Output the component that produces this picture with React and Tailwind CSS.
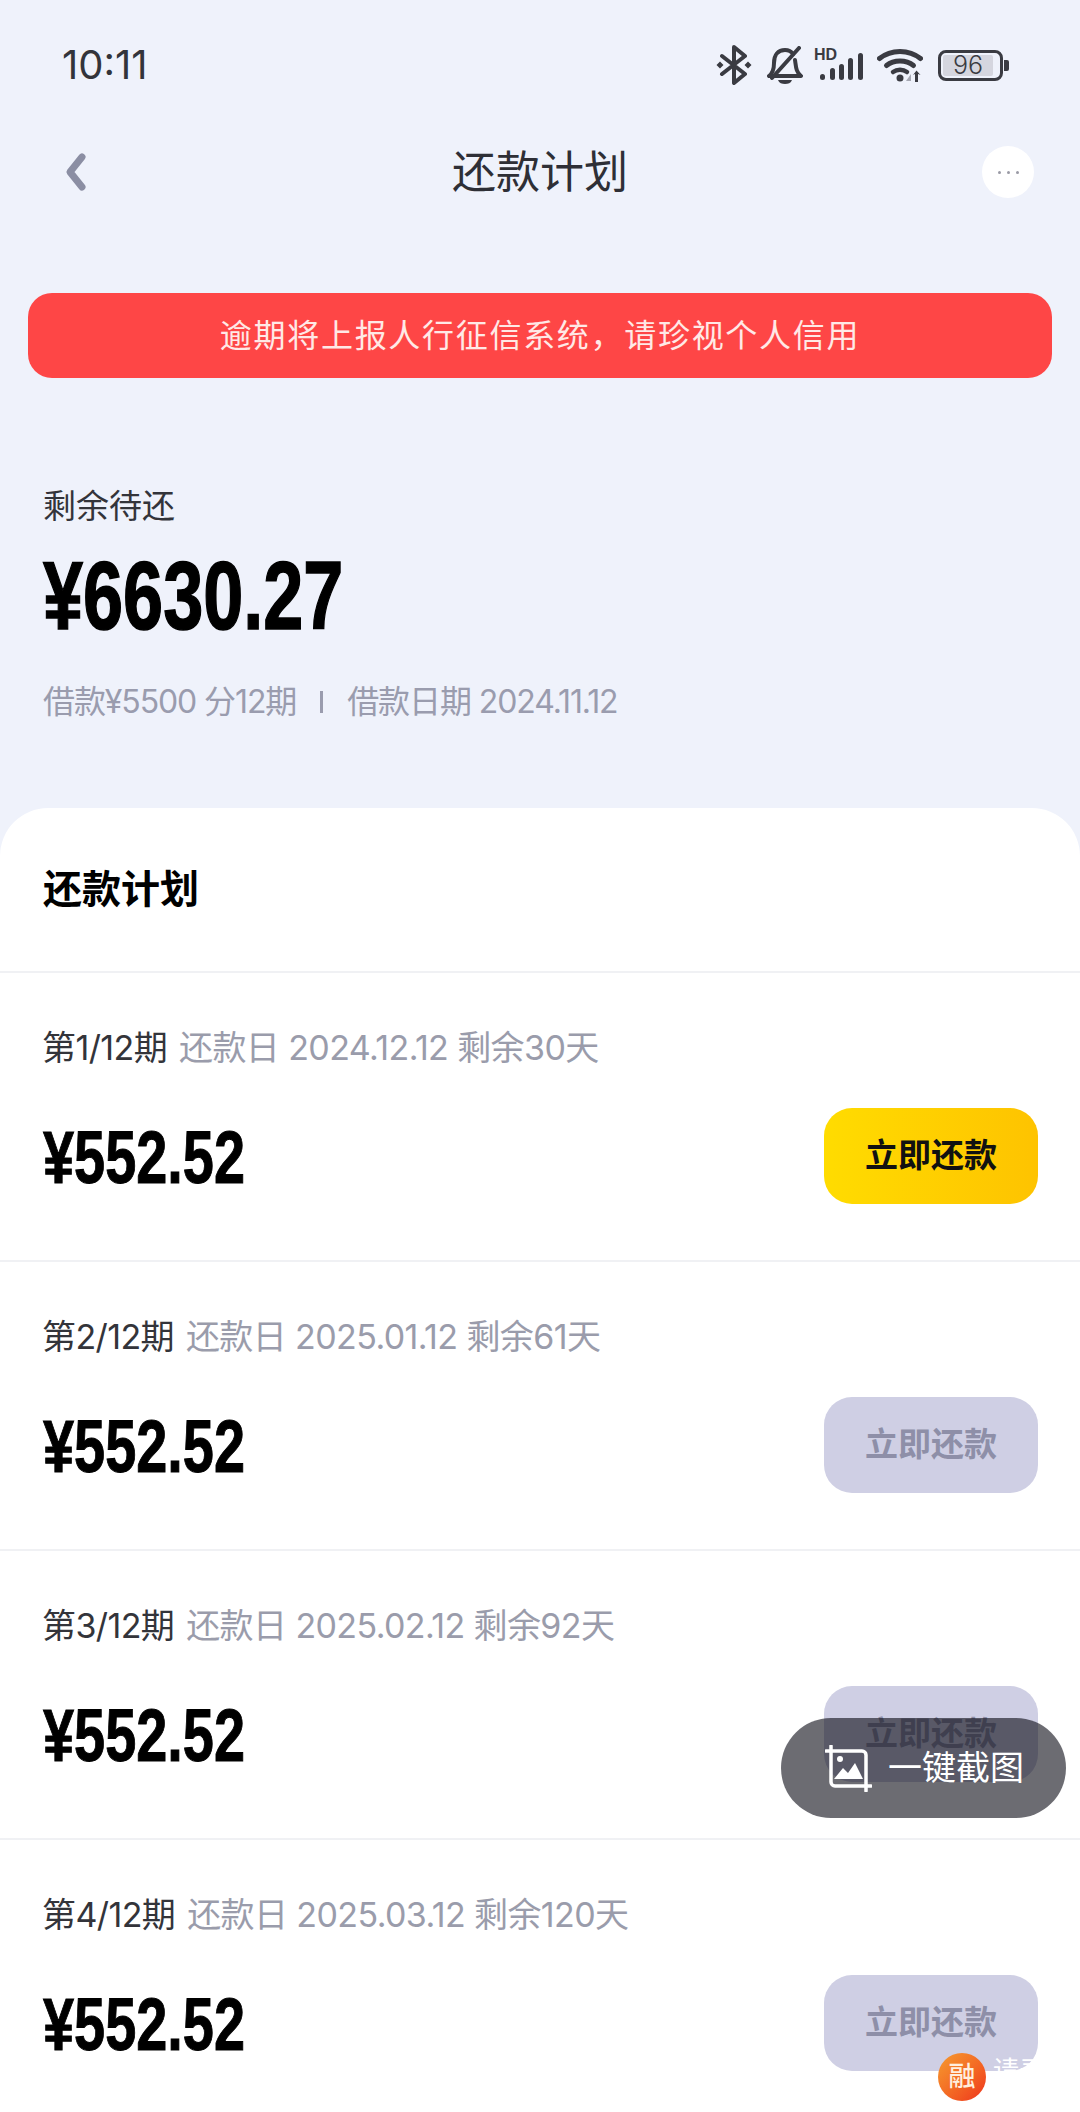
import React from "react";

const cjk = "font-['Inter','Noto_Sans_CJK_SC',sans-serif]";
const amountFont = "font-['Liberation_Sans',sans-serif]";

const plans = [
  { id: "第1/12期", date: "还款日 2024.12.12 剩余30天", active: true },
  { id: "第2/12期", date: "还款日 2025.01.12 剩余61天" },
  { id: "第3/12期", date: "还款日 2025.02.12 剩余92天" },
  { id: "第4/12期", date: "还款日 2025.03.12 剩余120天" },
];

function StatusIcons() {
  return (
    <div className="flex items-center pr-[71px] text-[#3a3b42]">
      {/* bluetooth */}
      <svg width="36" height="40" viewBox="0 0 36 40" fill="none">
        <path d="M6 11 29 29 18 38V2l11 9L6 29" stroke="currentColor" strokeWidth="4" strokeLinejoin="round" strokeLinecap="round" />
        <path d="M4 16.500 7.500 20 4 23.500 .5 20zM32 16.500 35.500 20 32 23.500 28.500 20z" fill="currentColor" />
      </svg>
      {/* muted bell */}
      <svg className="ml-[15px]" width="36" height="38" viewBox="0 0 36 38" fill="none">
        <path d="M2 30c4-3 5-7 5-13C7 9 11 4 18 4c3 0 6 1 8 4M28 14c1 7 1 12 6 16H2" stroke="currentColor" strokeWidth="4" strokeLinejoin="round" strokeLinecap="round" />
        <path d="M5 32 32 2" stroke="currentColor" strokeWidth="4" strokeLinecap="round" />
        <path d="M11 34h14c-1 3-4 4-7 4s-6-1-7-4z" fill="currentColor" />
      </svg>
      {/* hd + signal */}
      <div className="relative ml-[11px] h-[32px] w-[50px]">
        <span className="absolute left-0 top-[-2px] font-['Liberation_Sans',sans-serif] text-[16px] leading-[16px] font-bold">HD</span>
        <svg className="absolute left-0 top-0" width="50" height="32" viewBox="0 0 50 32" fill="currentColor">
          <rect x="6" y="25" width="5" height="6" rx="2.500" />
          <rect x="16" y="19" width="5" height="12" rx="2.500" />
          <rect x="25" y="15" width="5" height="16" rx="2.500" />
          <rect x="34" y="9" width="5" height="22" rx="2.500" />
          <rect x="44" y="4" width="5" height="27" rx="2.500" />
        </svg>
      </div>
      {/* wifi */}
      <svg className="ml-[13px]" width="46" height="36" viewBox="0 0 46 36" fill="none">
        <path d="M2.500 11.500C14 2 32 2 43.500 11.500" stroke="currentColor" strokeWidth="5" strokeLinecap="round" />
        <path d="M9.500 18.500C17 12.500 29 12.500 36.500 18.500" stroke="currentColor" strokeWidth="5" strokeLinecap="round" />
        <path d="M16 25c4-3 10-3 14 0" stroke="currentColor" strokeWidth="4.500" strokeLinecap="round" />
        <circle cx="23" cy="31" r="3.500" fill="currentColor" />
        <path d="M38 27v8h3v-8l2.500 1-4-4.500-3.500 4.500z" fill="currentColor" />
        <path d="M34 27v7h-5z" fill="#a5a7b2" />
      </svg>
      {/* battery */}
      <div className="ml-[15px] flex items-center">
        <div className="flex h-[31px] w-[65px] items-center rounded-[8px] border-[3px] border-current p-[2px]">
          <div className="flex h-full w-[50px] items-center justify-center rounded-[2px] bg-[#d5d6df] font-['Inter',sans-serif] text-[25px] leading-none font-light">96</div>
        </div>
        <div className="ml-[1px] h-[11px] w-[5px] rounded-r-[2px] bg-current" />
      </div>
    </div>
  );
}

function PlanRow({ id, date, active }) {
  return (
    <div className="border-t-2 border-[#f0f1f4] pl-[43px] pr-[42px] pt-[53px] pb-[56px]">
      <div className="-ml-[1px] flex h-[44px] items-center text-[34px] leading-[44px] tracking-[-0.6px] whitespace-nowrap">
        <span className="text-[#33343a]">{id}</span>
        <span className="ml-[12px] text-[#9a9cab]">{date}</span>
      </div>
      <div className="mt-[38px] flex items-center justify-between">
        <div className={`${amountFont} origin-left scale-x-[0.745] pt-[3px] text-[75px] leading-[93px] font-bold text-black [-webkit-text-stroke:1px_#000]`}>¥552.52</div>
        <div
          className={
            active
              ? "flex h-[96px] w-[214px] items-center justify-center rounded-[28px] bg-gradient-to-r from-[#ffdc00] to-[#fec300] text-[33px] font-bold text-[#111]"
              : "flex h-[96px] w-[214px] items-center justify-center rounded-[28px] bg-[#cfcfe4] text-[33px] font-bold text-[#8e8fa8]"
          }
        >
          立即还款
        </div>
      </div>
    </div>
  );
}

export default function App() {
  return (
    <div className={`${cjk} relative h-[2112px] w-[1080px] overflow-hidden bg-[#eff2fb]`}>
      {/* status bar */}
      <div className="flex h-[130px] items-center justify-between pl-[62px]">
        <span className="text-[40px] leading-none text-[#33343a]">10:11</span>
        <StatusIcons />
      </div>

      {/* nav */}
      <div className="relative flex h-[84px] items-center justify-center">
        <svg className="absolute left-[62px]" width="28" height="40" viewBox="0 0 28 40" fill="none">
          <path d="M20 5 8 20l12 15" stroke="#8b8ea3" strokeWidth="7" strokeLinecap="round" strokeLinejoin="round" />
        </svg>
        <h1 className="text-[44px] leading-none font-normal text-[#2e2f36]">还款计划</h1>
        <div className="absolute right-[46px] flex h-[52px] w-[52px] items-center justify-center gap-[6px] rounded-full bg-white">
          <span className="h-[3px] w-[3px] rounded-full bg-[#9a9aa5]" />
          <span className="h-[3px] w-[3px] rounded-full bg-[#9a9aa5]" />
          <span className="h-[3px] w-[3px] rounded-full bg-[#9a9aa5]" />
        </div>
      </div>

      {/* overdue warning */}
      <div className="mx-[28px] mt-[79px] flex h-[85px] items-center justify-center rounded-[24px] bg-[#fe4646] text-[32px] tracking-[1.7px] text-[#ffe9e6]">
        逾期将上报人行征信系统，请珍视个人信用
      </div>

      {/* summary */}
      <div className="px-[43px]">
        <div className="mt-[106px] h-[44px] text-[33px] leading-[44px] text-[#33343a]">剩余待还</div>
        <div className={`${amountFont} mt-[18px] origin-left scale-x-[0.75] text-[96px] leading-[100px] font-bold text-black [-webkit-text-stroke:1.5px_#000]`}>¥6630.27</div>
        <div className="mt-[34px] flex h-[44px] items-center text-[32px] leading-[44px] tracking-[-1.1px] whitespace-nowrap text-[#9a9cae]">
          <span>借款¥5500 分12期</span>
          <span className="mx-[24px] h-[22px] w-[3px] bg-[#9a9cae]" />
          <span>借款日期 2024.11.12</span>
        </div>
      </div>

      {/* plan sheet */}
      <div className="mt-[84px] rounded-t-[48px] bg-white">
        <div className="flex h-[163px] items-center px-[43px] text-[39px] font-bold text-black">还款计划</div>
        {plans.map((p) => (
          <PlanRow key={p.id} {...p} />
        ))}
      </div>

      {/* screenshot pill */}
      <div className="absolute left-[781px] top-[1718px] flex h-[100px] w-[285px] items-center rounded-full bg-[#0a0a14]/60 pl-[44px] text-white">
        <svg width="47" height="47" viewBox="0 0 47 47" fill="none">
          <path d="M6 1v36a4 4 0 0 0 4 4h36" stroke="#fff" strokeWidth="3.500" strokeLinecap="round" />
          <path d="M1 6h36a4 4 0 0 1 4 4v36" stroke="#fff" strokeWidth="3.500" strokeLinecap="round" />
          <circle cx="15" cy="14" r="3" fill="#fff" />
          <path d="M9 34l9-11 5 5 7-10 8 16z" fill="#fff" />
        </svg>
        <span className="ml-[16px] text-[34px] leading-none">一键截图</span>
      </div>

      {/* floating badge */}
      <div className="absolute left-[938px] top-[2053px] flex h-[48px] w-[48px] items-center justify-center rounded-full bg-gradient-to-br from-[#f59a2e] to-[#ee2d1c] text-[27px] font-medium text-[#ffeedd]">融</div>
      <div className="absolute left-[993px] top-[2058px] text-[26px] leading-none whitespace-nowrap text-white">请录</div>
    </div>
  );
}
